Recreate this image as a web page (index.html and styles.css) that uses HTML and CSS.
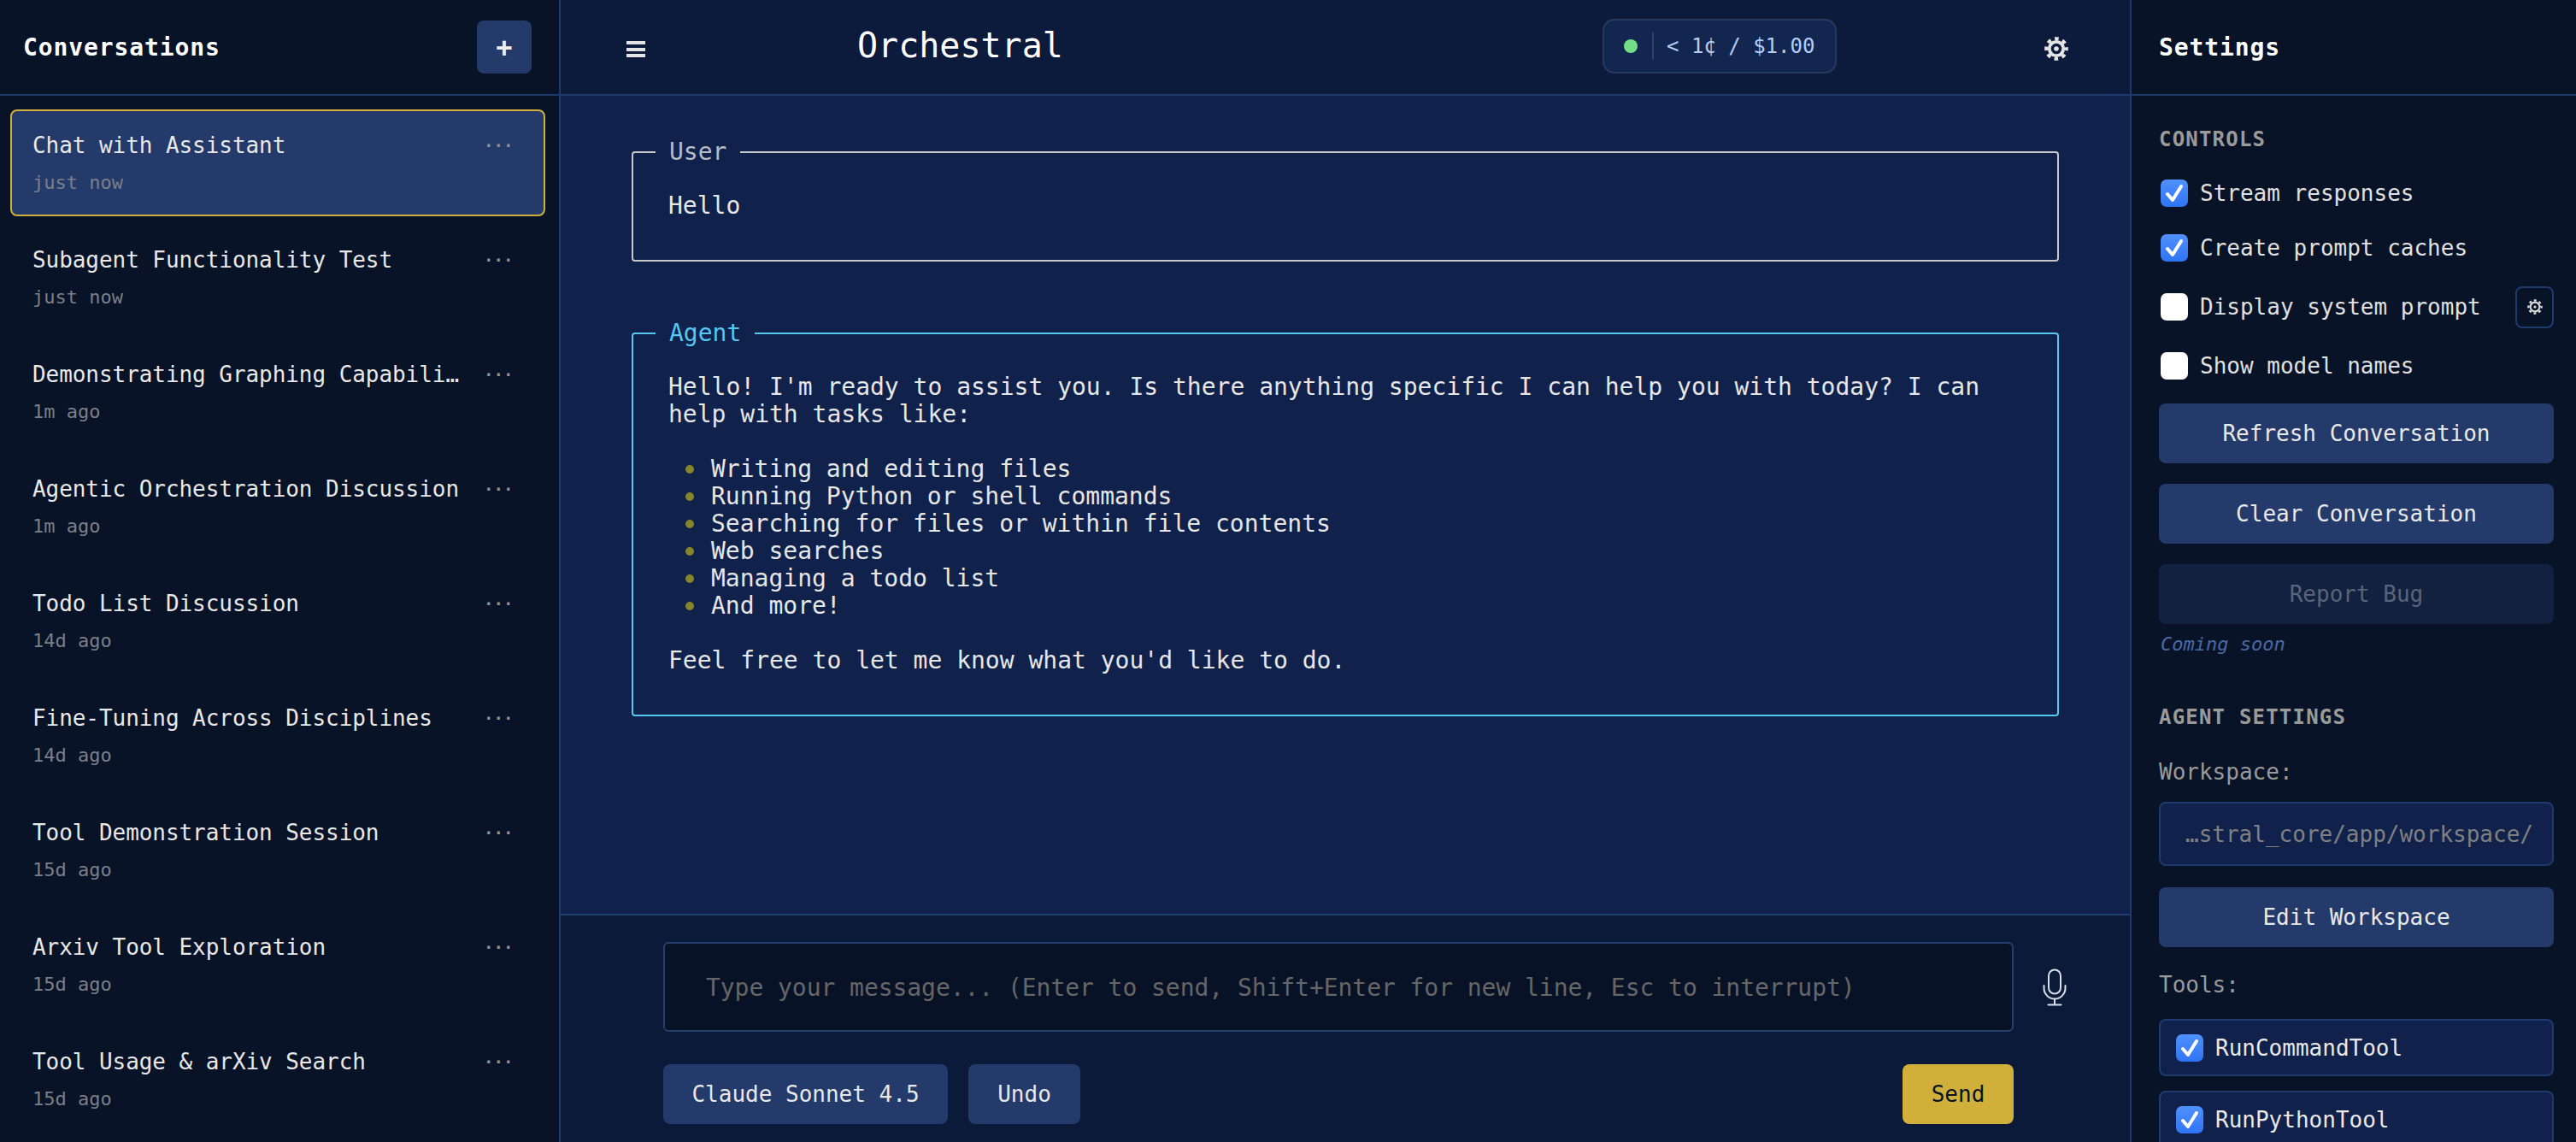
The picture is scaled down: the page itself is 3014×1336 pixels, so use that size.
FILE: index.html
```html
<!DOCTYPE html>
<html lang="en">
<head>
<meta charset="utf-8">
<title>Orchestral</title>
<link rel="stylesheet" href="styles.css">
</head>
<body>
<div class="app">
  <aside class="left">
    <div class="side-head">
      <h2 class="side-title">Conversations</h2>
      <button class="new-btn">+</button>
    </div>
    <div class="conv-list">
      <div class="conv active"><div class="conv-text"><div class="conv-name">Chat with Assistant</div><div class="conv-time">just now</div></div><div class="dots">···</div></div>
      <div class="conv"><div class="conv-text"><div class="conv-name">Subagent Functionality Test</div><div class="conv-time">just now</div></div><div class="dots">···</div></div>
      <div class="conv"><div class="conv-text"><div class="conv-name">Demonstrating Graphing Capabili…</div><div class="conv-time">1m ago</div></div><div class="dots">···</div></div>
      <div class="conv"><div class="conv-text"><div class="conv-name">Agentic Orchestration Discussion</div><div class="conv-time">1m ago</div></div><div class="dots">···</div></div>
      <div class="conv"><div class="conv-text"><div class="conv-name">Todo List Discussion</div><div class="conv-time">14d ago</div></div><div class="dots">···</div></div>
      <div class="conv"><div class="conv-text"><div class="conv-name">Fine-Tuning Across Disciplines</div><div class="conv-time">14d ago</div></div><div class="dots">···</div></div>
      <div class="conv"><div class="conv-text"><div class="conv-name">Tool Demonstration Session</div><div class="conv-time">15d ago</div></div><div class="dots">···</div></div>
      <div class="conv"><div class="conv-text"><div class="conv-name">Arxiv Tool Exploration</div><div class="conv-time">15d ago</div></div><div class="dots">···</div></div>
      <div class="conv"><div class="conv-text"><div class="conv-name">Tool Usage &amp; arXiv Search</div><div class="conv-time">15d ago</div></div><div class="dots">···</div></div>
    </div>
  </aside>

  <main class="center">
    <header class="top">
      <svg class="burger" viewBox="0 0 22 19" fill="#e4e4e4"><rect width="22" height="4" y="0"/><rect width="22" height="4" y="8"/><rect width="22" height="4" y="15"/></svg>
      <h1 class="brand">Orchestral</h1>
      <div class="pill"><span class="pill-dot"></span><span class="pill-sep"></span><span class="pill-text">&lt; 1¢ / $1.00</span></div>
      <svg class="top-gear" viewBox="0 0 28 28" fill="none" stroke="#e6e6e6"><circle cx="14" cy="14" r="11.8" stroke-width="4" stroke-dasharray="4.6 4.67" stroke-dashoffset="2.3"/><circle cx="14" cy="14" r="8.2" stroke-width="3.8"/><circle cx="14" cy="14" r="2.8" fill="#e6e6e6" stroke="none"/></svg>
    </header>
    <section class="messages">
      <fieldset class="msg msg-user">
        <legend>User</legend>
        <p>Hello</p>
      </fieldset>
      <fieldset class="msg msg-agent">
        <legend>Agent</legend>
        <p>Hello! I'm ready to assist you. Is there anything specific I can help you with today? I can<br>help with tasks like:</p>
        <ul>
          <li>Writing and editing files</li>
          <li>Running Python or shell commands</li>
          <li>Searching for files or within file contents</li>
          <li>Web searches</li>
          <li>Managing a todo list</li>
          <li>And more!</li>
        </ul>
        <p>Feel free to let me know what you'd like to do.</p>
      </fieldset>
    </section>
    <section class="composer">
      <div class="composer-row">
        <div class="prompt">Type your message... (Enter to send, Shift+Enter for new line, Esc to interrupt)</div>
        <svg class="mic" viewBox="0 0 28 44" fill="none" stroke="#d9dfe8" stroke-width="2" stroke-linecap="round">
          <rect x="7" y="1.5" width="14" height="28" rx="7"/>
          <path d="M1.5 20v3a12.5 12.5 0 0 0 25 0v-3"/>
          <path d="M14 36v6.5M6.5 42.6h15"/>
        </svg>
      </div>
      <div class="action-row">
        <button class="btn btn-model">Claude Sonnet 4.5</button>
        <button class="btn btn-undo">Undo</button>
        <button class="btn btn-send">Send</button>
      </div>
    </section>
  </main>

  <aside class="right">
    <div class="side-head">
      <h2 class="side-title">Settings</h2>
    </div>
    <div class="settings">
      <h3 class="group-title">CONTROLS</h3>
      <div class="stack">
        <label class="row row-first"><span class="box on"><svg viewBox="0 0 32 32"><path d="M8 17l6 7L24 8" fill="none" stroke="#fff" stroke-width="4" stroke-linecap="round" stroke-linejoin="round"/></svg></span>Stream responses</label>
        <label class="row"><span class="box on"><svg viewBox="0 0 32 32"><path d="M8 17l6 7L24 8" fill="none" stroke="#fff" stroke-width="4" stroke-linecap="round" stroke-linejoin="round"/></svg></span>Create prompt caches</label>
        <label class="row row-gear"><span class="box"></span>Display system prompt<span class="mini-gear"><svg class="mini-gear-icon" viewBox="0 0 28 28" fill="none" stroke="#e0e0e0"><circle cx="14" cy="14" r="11.8" stroke-width="3.6" stroke-dasharray="4.6 4.67" stroke-dashoffset="2.3"/><circle cx="14" cy="14" r="8.4" stroke-width="3.2"/><circle cx="14" cy="14" r="2.4" fill="#e0e0e0" stroke="none"/></svg></span></label>
        <label class="row"><span class="box"></span>Show model names</label>
      </div>
      <div class="buttons">
        <button class="side-btn">Refresh Conversation</button>
        <button class="side-btn">Clear Conversation</button>
        <button class="side-btn disabled">Report Bug</button>
      </div>
      <div class="soon">Coming soon</div>
      <h3 class="group-title agent">AGENT SETTINGS</h3>
      <div class="field-label workspace">Workspace:</div>
      <div class="path">…stral_core/app/workspace/</div>
      <button class="side-btn edit">Edit Workspace</button>
      <div class="field-label tools">Tools:</div>
      <div class="tool-list">
        <label class="tool"><span class="box on"><svg viewBox="0 0 32 32"><path d="M8 17l6 7L24 8" fill="none" stroke="#fff" stroke-width="4" stroke-linecap="round" stroke-linejoin="round"/></svg></span>RunCommandTool</label>
        <label class="tool"><span class="box on"><svg viewBox="0 0 32 32"><path d="M8 17l6 7L24 8" fill="none" stroke="#fff" stroke-width="4" stroke-linecap="round" stroke-linejoin="round"/></svg></span>RunPythonTool</label>
      </div>
    </div>
  </aside>
</div>
</body>
</html>
```

FILE: styles.css
```css
* { box-sizing: border-box; }
html, body { margin: 0; height: 100%; overflow: hidden; }
body {
  font-family: "DejaVu Sans Mono", "Liberation Mono", monospace;
  background: #10224c;
  color: #e6e6e6;
}
button { font-family: inherit; border: 0; cursor: pointer; }
h1, h2, h3, p { margin: 0; }

.app { display: flex; height: 1336px; overflow: hidden; }

.left {
  width: 656px;
  flex: none;
  background: #081327;
  border-right: 2px solid #1f3a6e;
  overflow: hidden;
}
.right {
  width: 522px;
  flex: none;
  background: #081327;
  border-left: 2px solid #1f3a6e;
  overflow: hidden;
}
.center { flex: 1; min-width: 0; display: flex; flex-direction: column; }

.side-head {
  height: 112px;
  border-bottom: 2px solid #1f3a6e;
  display: flex;
  align-items: center;
  justify-content: space-between;
  padding: 0 32px 0 27px;
}
.right .side-head { padding-left: 32px; }
.side-title {
  font-size: 28px;
  font-weight: 700;
  letter-spacing: 0.9px;
  color: #fff;
}
.new-btn {
  width: 64px;
  height: 62px;
  border-radius: 8px;
  background: #243a6b;
  color: #eee;
  font-size: 32px;
  font-weight: 700;
  line-height: 1;
  padding: 0;
}

.conv-list { padding: 16px 16px 0 12px; }
.conv {
  display: flex;
  align-items: flex-start;
  height: 125px;
  margin-bottom: 9px;
  border: 2px solid transparent;
  border-radius: 8px;
  padding: 24px;
}
.conv.active { background: #243a6b; border-color: #d0b03a; }
.conv-text { flex: none; width: 502px; }
.conv-name {
  font-size: 26px;
  line-height: 32px;
  letter-spacing: -0.06px;
  color: #e8e8e8;
  white-space: nowrap;
}
.conv-time {
  font-size: 22px;
  line-height: 32px;
  margin-top: 12px;
  color: #7b7f88;
}
.dots {
  margin-left: 26px;
  font-size: 19px;
  line-height: 32px;
  color: #8f949c;
  font-weight: 700;
}

.top {
  height: 112px;
  flex: none;
  background: #0c1b3c;
  border-bottom: 2px solid #1f3a6e;
  display: flex;
  align-items: center;
  padding: 0 72px 0 77px;
}
.burger { width: 22px; height: 19px; flex: none; margin-top: 5px; }
.brand {
  margin-left: 248px;
  font-size: 40px;
  font-weight: 400;
  color: #fff;
  line-height: 1;
  margin-top: -4px;
}
.pill {
  margin-left: auto;
  width: 274px;
  height: 64px;
  margin-top: -2px;
  background: #13264f;
  border: 2px solid #26395f;
  border-radius: 14px;
  display: flex;
  align-items: center;
  padding-left: 23px;
}
.pill-dot { width: 16px; height: 16px; border-radius: 50%; background: #74dd85; }
.pill-sep { width: 2px; height: 32px; background: #2f4168; margin: 0 15px 0 17px; }
.pill-text { font-size: 24px; color: #b4ccf7; white-space: nowrap; }
.top-gear {
  margin-left: 243px;
  width: 28px;
  height: 28px;
  flex: none;
  margin-top: 3px;
}

.messages { flex: 1; min-height: 0; padding: 50px 83px 0 83px; }
.msg {
  margin: 0 0 68px;
  padding: 31px 42px 47px 41px;
  border: 2px solid #c8c8c8;
  border-radius: 4px;
  min-width: 0;
  font-size: 28px;
  line-height: 32px;
  color: #e6e6e6;
}
.msg legend {
  margin-left: -15px;
  padding: 0 16px;
  font-size: 28px;
  line-height: 32px;
}
.msg-user legend { color: #b8bcc2; }
.msg-agent { border-color: #55c8f2; }
.msg-agent legend { color: #55c8f2; }
.msg ul { margin: 32px 0 32px 20px; padding: 0; list-style: none; }
.msg li { display: flex; align-items: center; gap: 20px; }
.msg li::before {
  content: "";
  width: 10px;
  height: 10px;
  border-radius: 50%;
  background: #868628;
  flex: none;
}

.composer {
  height: 267px;
  flex: none;
  background: #0b1a38;
  border-top: 2px solid #1f3a6e;
  padding: 31px 0 0 120px;
}
.composer-row { display: flex; align-items: center; gap: 34px; padding-right: 74px; }
.prompt {
  flex: 1;
  min-width: 0;
  height: 105px;
  background: #081226;
  border: 2px solid #25406f;
  border-radius: 6px;
  padding: 2px 48px 0;
  display: flex;
  align-items: center;
  font-size: 28px;
  letter-spacing: -0.05px;
  color: #666;
  white-space: nowrap;
  overflow: hidden;
}
.mic { width: 28px; height: 44px; flex: none; }
.action-row { display: flex; gap: 24px; margin-top: 38px; padding-right: 136px; }
.btn {
  height: 70px;
  border-radius: 8px;
  font-size: 26px;
  padding: 0;
  background: #243a6b;
  color: #e8e8e8;
}
.btn-model { width: 333px; }
.btn-undo { width: 131px; }
.btn-send { width: 130px; margin-left: auto; background: #d0b03a; color: #081327; }

.settings { padding: 35px 26px 0 32px; }
.group-title {
  font-size: 24px;
  line-height: 32px;
  font-weight: 700;
  letter-spacing: 1.2px;
  color: #9a9a9a;
}
.stack { display: flex; flex-direction: column; gap: 28px; margin-top: 31px; }
.row {
  display: flex;
  align-items: center;
  min-height: 32px;
  font-size: 26px;
  line-height: 32px;
  color: #e0e0e0;
  white-space: nowrap;
}
.row-first { margin-bottom: 4px; }
.row-gear { height: 50px; }
.box {
  width: 32px;
  height: 32px;
  flex: none;
  margin: 0 14px 0 2px;
  border-radius: 7px;
  background: #fff;
  display: block;
}
.box.on { background: linear-gradient(#4f91ff, #2f74f5); }
.box svg { display: block; width: 32px; height: 32px; }
.mini-gear {
  margin-left: auto;
  width: 45px;
  height: 49px;
  border: 2px solid #1f3a6e;
  border-radius: 8px;
  display: flex;
  align-items: center;
  justify-content: center;
}
.mini-gear-icon { width: 18px; height: 18px; display: block; }
.buttons { display: flex; flex-direction: column; gap: 24px; margin-top: 28px; }
.side-btn {
  display: block;
  width: 100%;
  height: 70px;
  border-radius: 8px;
  background: #243a6b;
  color: #e8e8e8;
  font-size: 26px;
  padding: 0;
}
.side-btn.disabled { background: #12213f; color: #5b6478; }
.soon {
  margin-top: 9px;
  font-size: 22px;
  line-height: 30px;
  font-style: italic;
  color: #4a6aa5;
  padding-left: 2px;
}
.group-title.agent { margin-top: 54px; }
.field-label { font-size: 26px; line-height: 32px; color: #9a9a9a; }
.field-label.workspace { margin-top: 32px; }
.path {
  margin-top: 19px;
  height: 75px;
  background: #10224c;
  border: 2px solid #1f3a6e;
  border-radius: 8px;
  padding: 0 0 0 29px;
  display: flex;
  align-items: center;
  font-size: 26px;
  color: #808080;
  white-space: nowrap;
  overflow: hidden;
}
.side-btn.edit { margin-top: 25px; }
.field-label.tools { margin-top: 28px; }
.tool-list { display: flex; flex-direction: column; gap: 17px; margin-top: 24px; }
.tool {
  height: 67px;
  flex: none;
  background: #10224c;
  border: 2px solid #1f3a6e;
  border-radius: 8px;
  padding-left: 16px;
  display: flex;
  align-items: center;
  font-size: 26px;
  color: #e8e8e8;
}
```
